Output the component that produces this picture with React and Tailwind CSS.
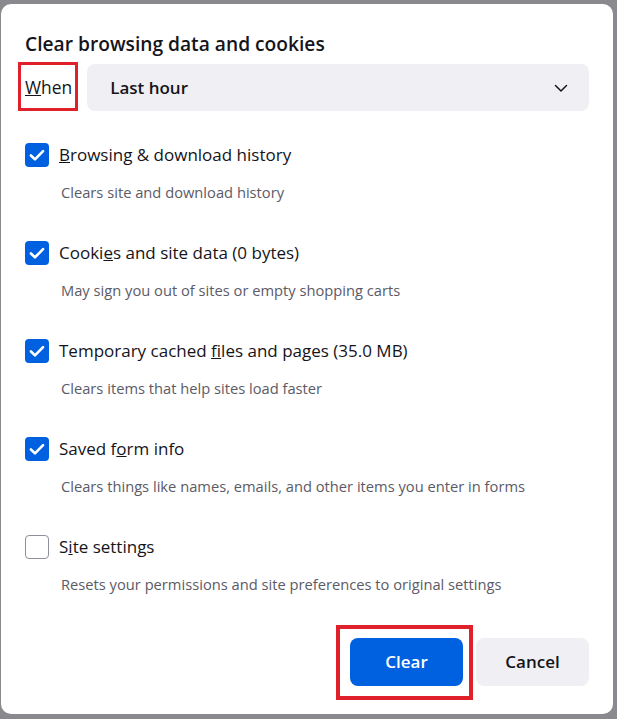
import React from "react";

function Check({ checked }) {
  if (!checked) {
    return <div className="h-[24px] w-[24px] shrink-0 rounded-[4px] border border-[#8f8f9d] bg-white" />;
  }
  return (
    <div className="flex h-[24px] w-[24px] shrink-0 items-center justify-center rounded-[4px] bg-[#0061e0]">
      <svg width="18" height="18" viewBox="0 0 16 16" fill="none">
        <path d="M2.6 8.4 L6.2 11.9 L13.4 4.5" stroke="white" strokeWidth="2.3" strokeLinecap="round" strokeLinejoin="round" />
      </svg>
    </div>
  );
}

function Item({ checked, label, desc }) {
  return (
    <div className="flex h-[98px] flex-col">
      <div className="flex h-[26px] items-center gap-[10px]">
        <Check checked={checked} />
        <span className="text-[17px] leading-[26px] text-[#15141a]">{label}</span>
      </div>
      <div className="mt-[13px] pl-[36px] text-[14.7px] leading-[22px] text-[#5b5b66]">{desc}</div>
    </div>
  );
}

export default function App() {
  const font = { fontFamily: '"Open Sans", "Noto Sans", sans-serif' };
  return (
    <div className="h-[719px] w-[617px] bg-[#8a8a8e] pb-[5px] pl-[1px] pr-[4px] pt-[4px]" style={font}>
      <div className="flex h-full flex-col rounded-[10px] bg-white px-[24px] pt-[26px]">
        <div className="text-[19.2px] font-semibold leading-[28px] text-[#15141a]">Clear browsing data and cookies</div>
        <div className="mt-[6px] flex h-[47px] items-center gap-[15px]">
          <div className="relative">
            <span className="text-[17.4px] text-[#15141a]"><u>W</u>hen</span>
            <div className="absolute -left-[7px] -right-[6px] -top-[12px] -bottom-[10px] border-[3px] border-[#e0202a]" />
          </div>
          <div className="flex h-[47px] flex-1 items-center justify-between rounded-[8px] bg-[#f0f0f4] pl-[23px] pr-[20px]">
            <span className="text-[17px] font-semibold text-[#15141a]">Last hour</span>
            <svg width="16" height="16" viewBox="0 0 16 16" fill="none">
              <path d="M2.5 5.5 L8 11 L13.5 5.5" stroke="#15141a" strokeWidth="1.5" strokeLinecap="round" strokeLinejoin="round" />
            </svg>
          </div>
        </div>
        <div className="mt-[31px] flex flex-col">
          <Item checked label={<><u>B</u>rowsing &amp; download history</>} desc="Clears site and download history" />
          <Item checked label={<>Cooki<u>e</u>s and site data (0 bytes)</>} desc="May sign you out of sites or empty shopping carts" />
          <Item checked label={<>Temporary cached <u>f</u>iles and pages (35.0 MB)</>} desc="Clears items that help sites load faster" />
          <Item checked label={<>Saved f<u>o</u>rm info</>} desc="Clears things like names, emails, and other items you enter in forms" />
          <div className="flex flex-col">
            <div className="flex h-[26px] items-center gap-[10px]">
              <Check checked={false} />
              <span className="text-[17px] leading-[26px] text-[#15141a]">S<u>i</u>te settings</span>
            </div>
            <div className="mt-[13px] pl-[36px] text-[14.7px] leading-[22px] text-[#5b5b66]">Resets your permissions and site preferences to original settings</div>
          </div>
        </div>
        <div className="mt-[43px] flex justify-end gap-[13px]">
          <div className="relative">
            <button className="h-[48px] w-[113px] rounded-[8px] bg-[#0061e0] text-[17px] font-semibold text-white">Clear</button>
            <div className="absolute -bottom-[14px] -left-[14px] -right-[10px] -top-[13px] border-[4px] border-[#e0202a]" />
          </div>
          <button className="h-[48px] w-[113px] rounded-[8px] bg-[#f0f0f4] text-[17px] font-semibold text-[#15141a]">Cancel</button>
        </div>
      </div>
    </div>
  );
}
